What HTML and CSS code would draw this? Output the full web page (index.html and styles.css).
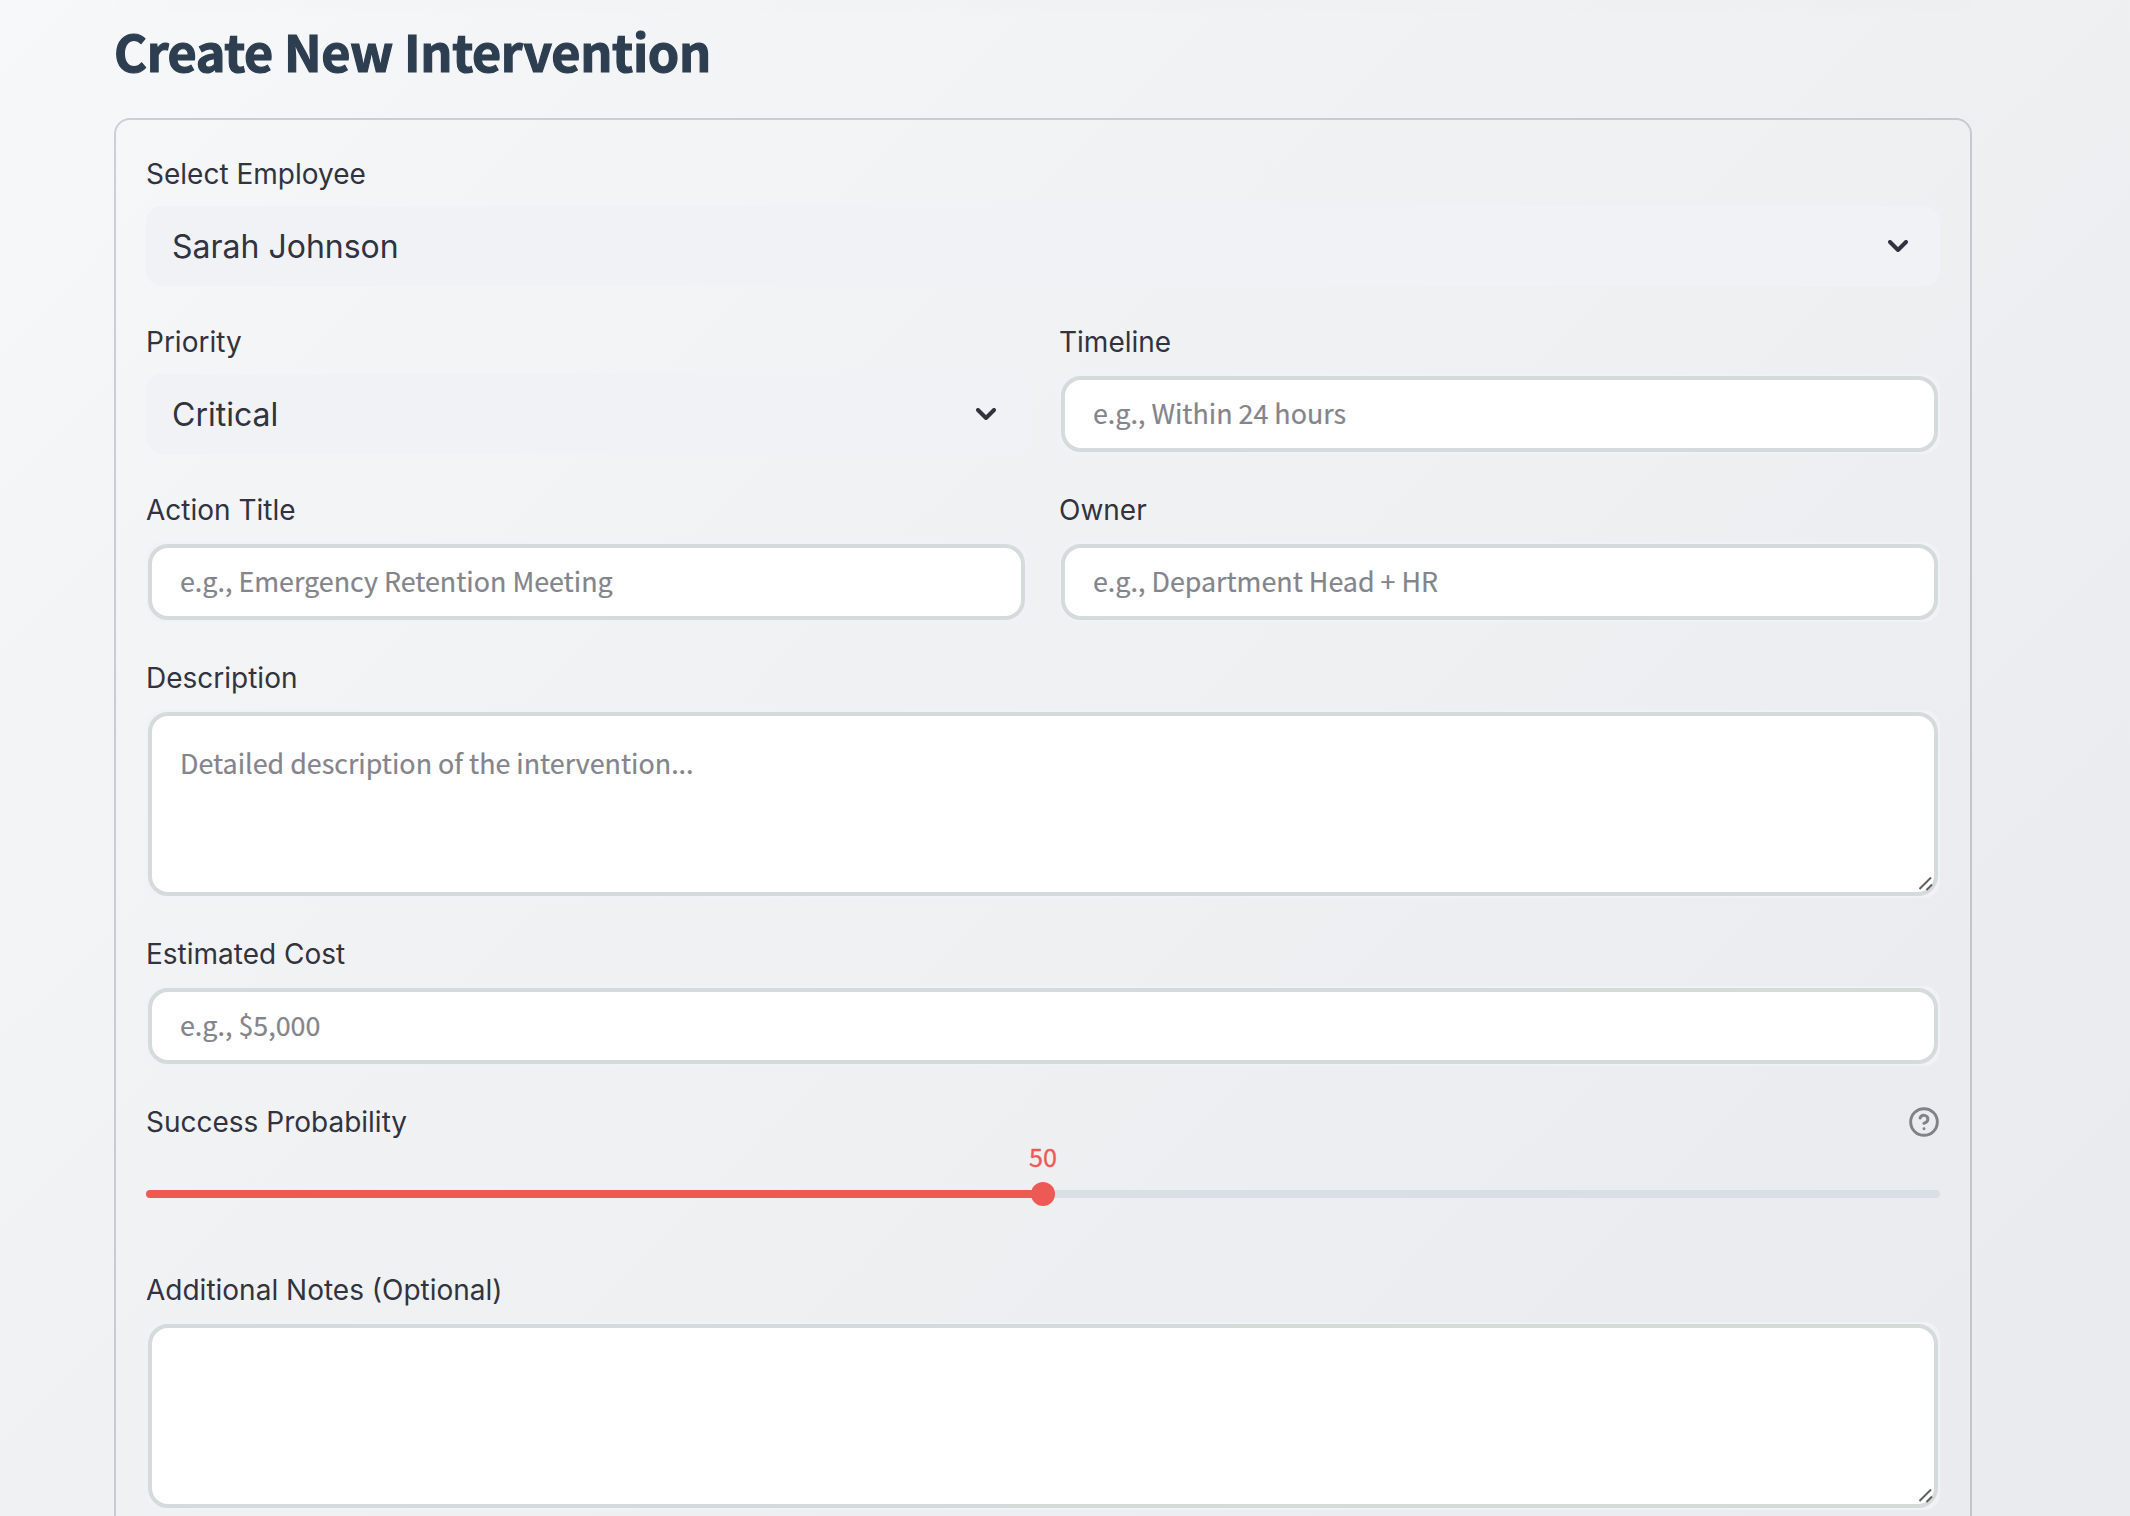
FILE: index.html
```html
<!DOCTYPE html>
<html lang="en">
<head>
<meta charset="utf-8">
<title>Create New Intervention</title>
<link rel="stylesheet" href="styles.css">
</head>
<body>
<main class="page">
  <div class="panel-edge"></div>
  <h1 class="page-title">Create New Intervention</h1>
  <form class="card">
    <div class="field">
      <div class="label">Select Employee</div>
      <div class="select"><span>Sarah Johnson</span>
        <svg class="chevron" viewBox="0 0 20 12"><path d="M2 2l8 8 8-8"/></svg>
      </div>
    </div>
    <div class="columns">
      <div class="field">
        <div class="label">Priority</div>
        <div class="select"><span>Critical</span>
          <svg class="chevron" viewBox="0 0 20 12"><path d="M2 2l8 8 8-8"/></svg>
        </div>
      </div>
      <div class="field">
        <div class="label">Timeline</div>
        <div class="control"><div class="input">e.g., Within 24 hours</div></div>
      </div>
    </div>
    <div class="columns">
      <div class="field">
        <div class="label">Action Title</div>
        <div class="control"><div class="input">e.g., Emergency Retention Meeting</div></div>
      </div>
      <div class="field">
        <div class="label">Owner</div>
        <div class="control"><div class="input">e.g., Department Head + HR</div></div>
      </div>
    </div>
    <div class="field">
      <div class="label">Description</div>
      <div class="control control-area"><div class="input area">Detailed description of the intervention...</div>
        <svg class="grip" viewBox="0 0 15 15"><path d="M.5 12L12 .5M7.500 13L13 7.500"/></svg>
      </div>
    </div>
    <div class="field">
      <div class="label">Estimated Cost</div>
      <div class="control"><div class="input">e.g., $5,000</div></div>
    </div>
    <div class="field slider-field">
      <div class="label">Success Probability
        <svg class="help" viewBox="0 0 24 24"><circle cx="12" cy="12" r="10"/><path d="M9.090 9a3 3 0 0 1 5.830 1c0 2-3 3-3 3M12 17h.01"/></svg>
      </div>
      <div class="slider">
        <div class="slider-value">50</div>
        <div class="track"><div class="fill"></div><div class="thumb"></div><div class="rest"></div></div>
      </div>
    </div>
    <div class="field">
      <div class="label">Additional Notes (Optional)</div>
      <div class="control control-area"><div class="input area"></div>
        <svg class="grip" viewBox="0 0 15 15"><path d="M.5 12L12 .5M7.500 13L13 7.500"/></svg>
      </div>
    </div>
  </form>
</main>
</body>
</html>
```
FILE: styles.css
```css
* { box-sizing: border-box; }

body {
  margin: 0;
  height: 1516px;
  font-family: Inter, sans-serif;
  color: #31333f;
  background: linear-gradient(135deg, #f6f8f9 0%, #f4f5f7 15%, #f1f2f4 36%, #eeeff1 61%, #ebecf0 80%, #e9ebef 100%);
}

.page {
  display: flex;
  flex-direction: column;
  width: 1858px;
  height: 1516px;
  margin-left: 114px;
}

.panel-edge {
  flex: none;
  height: 10px;
  border-radius: 0 0 40px 40px;
  background: rgba(0, 0, 0, 0.004);
}

.page-title {
  flex: none;
  height: 108px;
  margin: 0;
  padding-top: 7px;
  font: 700 50.3px/67px "Noto Sans CJK SC", sans-serif;
  letter-spacing: -0.36px;
  color: #2c3e50;
  -webkit-text-stroke: 1.2px #2c3e50;
}

.card {
  display: flex;
  flex: 1;
  flex-direction: column;
  gap: 32px;
  padding: 30px 30px 0;
  border: 2px solid rgba(49, 51, 63, 0.2);
  border-bottom: 0;
  border-radius: 16px 16px 0 0;
}

.columns {
  display: grid;
  grid-template-columns: 1fr 1fr;
  gap: 32px;
}

.field {
  display: flex;
  flex-direction: column;
  gap: 8px;
}

.label {
  display: flex;
  align-items: center;
  justify-content: space-between;
  height: 48px;
  font-size: 28px;
}

.select {
  display: flex;
  align-items: center;
  justify-content: space-between;
  height: 80px;
  padding: 0 32px 0 26px;
  border-radius: 16px;
  background: #f0f2f6;
  font-size: 32px;
}

.columns .select { padding-right: 31px; }

.chevron {
  width: 20px;
  height: 12px;
  fill: none;
  stroke: #31333f;
  stroke-width: 4;
  stroke-linecap: round;
  stroke-linejoin: round;
}

.control {
  position: relative;
  height: 80px;
  padding: 2px;
  border-radius: 16px;
  background: #f0f2f6;
}

.input {
  height: 100%;
  padding: 0 28px;
  border: 4px solid #d5dbdb;
  border-radius: 20px;
  background: #fff;
  color: #83848c;
  font: 400 26.85px/66px "Noto Sans CJK SC", sans-serif;
  -webkit-text-stroke: 0.2px #83848c;
}

.control-area { height: 188px; }

.area {
  padding-top: 24px;
  line-height: 45px;
}

.grip {
  position: absolute;
  right: 6px;
  bottom: 6px;
  width: 15px;
  height: 15px;
  fill: none;
  stroke: #606060;
  stroke-width: 2;
}

.help {
  width: 32px;
  height: 32px;
  fill: none;
  stroke: #808189;
  stroke-width: 2.2;
  stroke-linecap: round;
  stroke-linejoin: round;
}

.slider-field { height: 136px; gap: 0; }

.slider-value {
  height: 36px;
  text-align: center;
  font: 400 25.200px/21px "Noto Sans CJK SC", sans-serif;
  color: #ed5a55;
  -webkit-text-stroke: 0.3px #ed5a55;
}

.track {
  display: flex;
  align-items: center;
  height: 24px;
}

.fill, .rest {
  flex: 1;
  height: 8px;
  background: #ed5a55;
  border-radius: 4px 0 0 4px;
}

.rest {
  background: #d9dee7;
  border-radius: 0 4px 4px 0;
}

.thumb {
  z-index: 1;
  width: 24px;
  height: 24px;
  margin: 0 -1px;
  border-radius: 50%;
  background: #ed5a55;
}
```
